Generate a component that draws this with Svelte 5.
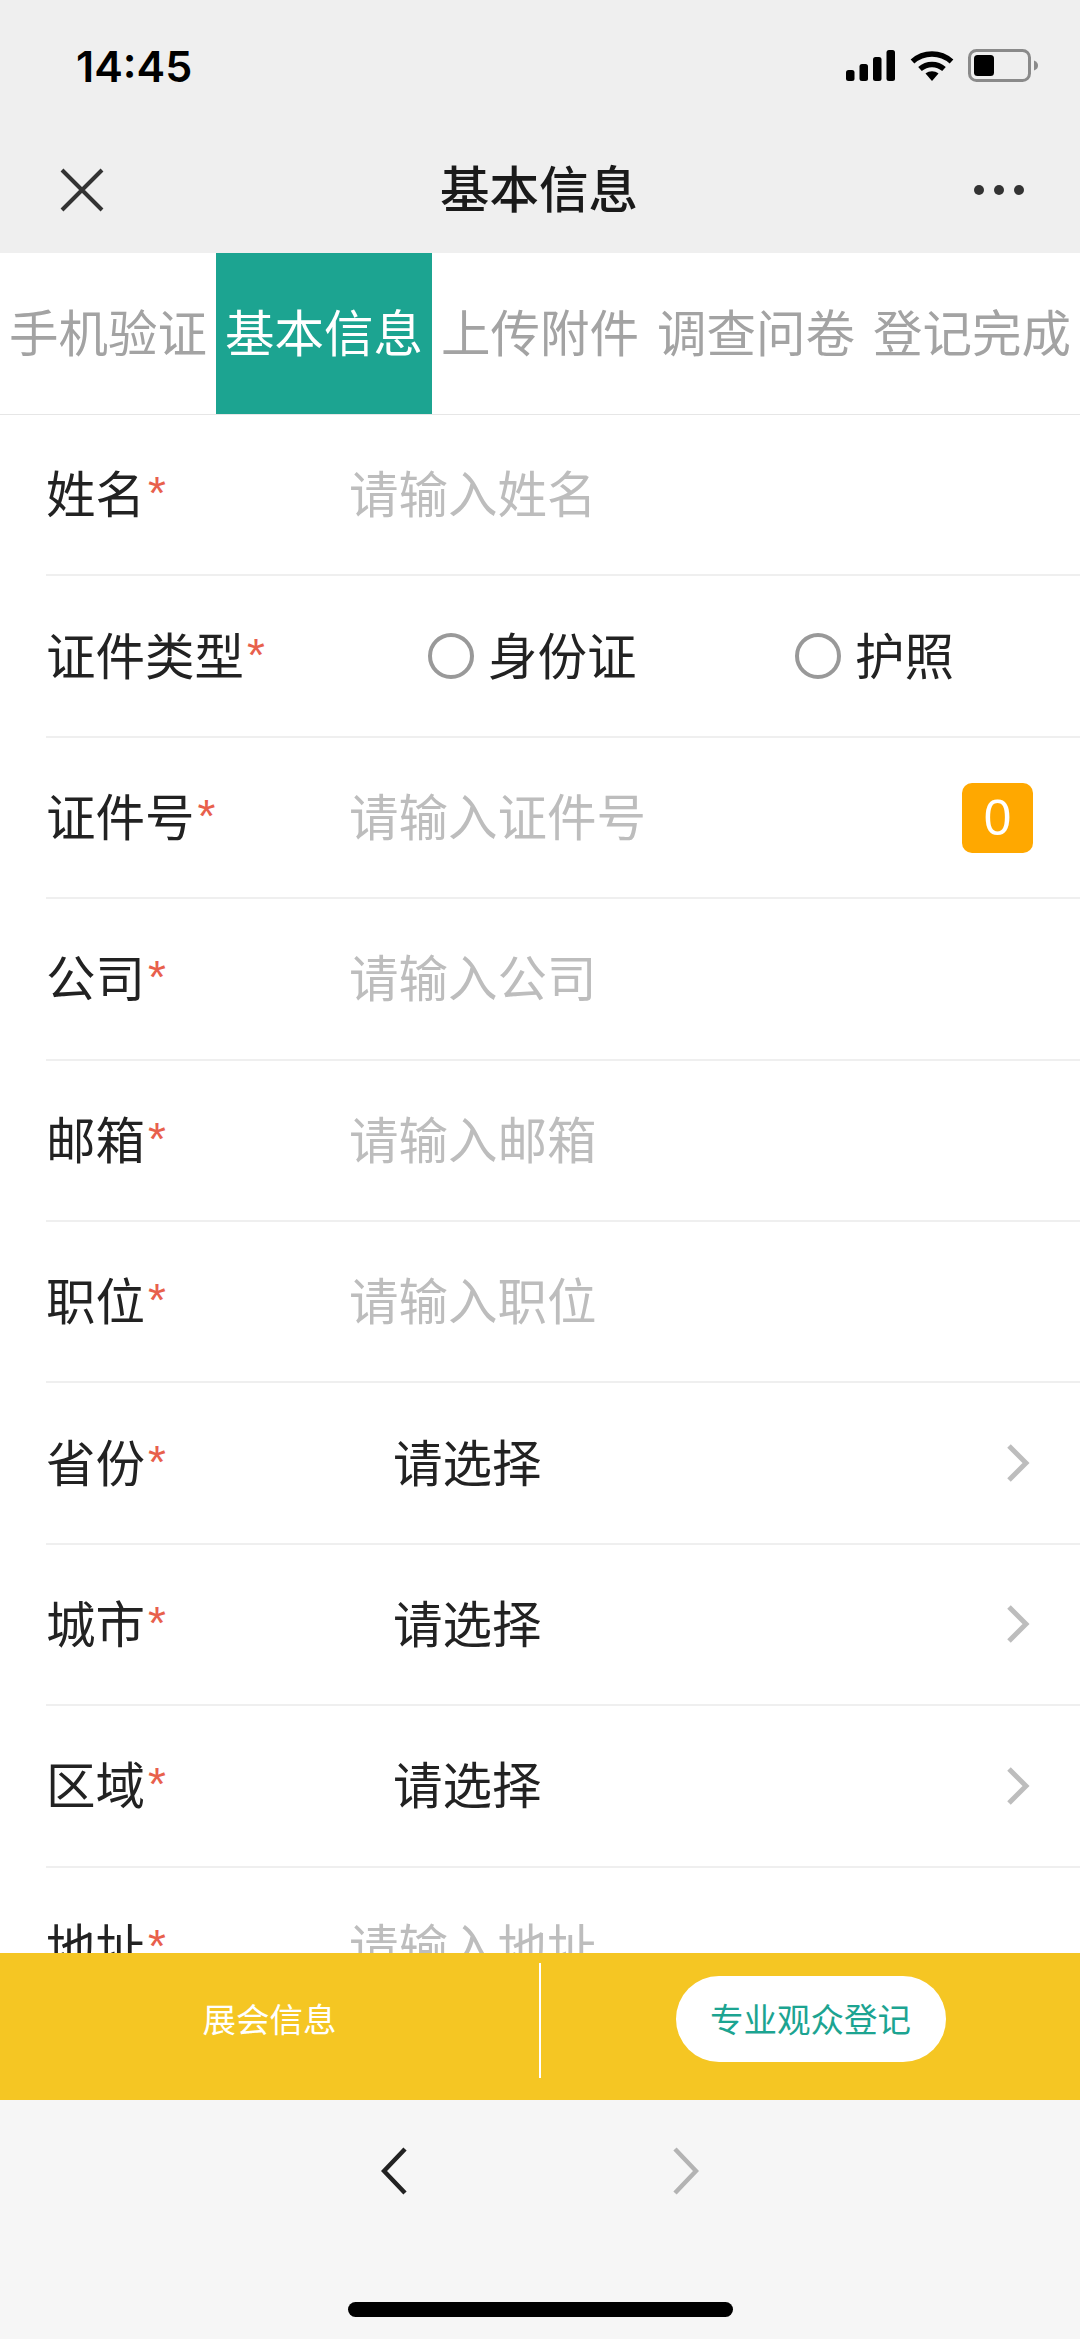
<script>
  const steps = ["手机验证", "基本信息", "上传附件", "调查问卷", "登记完成"]
  const activeStep = 1

  const rows = [
    { label: "姓名", type: "input", hint: "请输入姓名" },
    { label: "证件类型", type: "radio", options: ["身份证", "护照"] },
    { label: "证件号", type: "input", hint: "请输入证件号", badge: "0" },
    { label: "公司", type: "input", hint: "请输入公司" },
    { label: "邮箱", type: "input", hint: "请输入邮箱" },
    { label: "职位", type: "input", hint: "请输入职位" },
    { label: "省份", type: "select" },
    { label: "城市", type: "select" },
    { label: "区域", type: "select" },
    { label: "地址", type: "input", hint: "请输入地址" },
  ]
</script>

<div class="screen">
  <header class="top">
    <div class="status">
      <span class="time">14:45</span>
      <div class="status-icons">
        <svg width="50" height="32" viewBox="0 0 50 32" fill="#000">
          <rect x="0" y="20" width="8.5" height="11" rx="2.5" />
          <rect x="13.5" y="14" width="8.5" height="17" rx="2.5" />
          <rect x="27" y="7" width="8.5" height="24" rx="2.5" />
          <rect x="40.500" y="0" width="8.5" height="31" rx="2.5" />
        </svg>
        <svg class="wifi" width="44" height="32" viewBox="0 0 44 32" fill="none" stroke="#000">
          <path d="M2.500 11.500C13.500 1.500 30.500 1.500 41.500 11.500" stroke-width="5.500" />
          <path d="M10 19C17 13 27 13 34 19" stroke-width="5.500" />
          <path d="M15.500 23.500C19.500 20.500 24.500 20.500 28.500 23.500L22 31Z" fill="#000" stroke="none" />
        </svg>
        <svg class="battery" width="71" height="34" viewBox="0 0 71 34">
          <rect x="1.500" y="1.500" width="60" height="30" rx="7" fill="none" stroke="#8a8a8a" stroke-width="3" />
          <rect x="6" y="6" width="20" height="21" rx="3.500" fill="#000" />
          <path d="M66 11.500C69 12.500 70 14.500 70 16.500C70 18.500 69 20.500 66 21.500Z" fill="#8a8a8a" />
        </svg>
      </div>
    </div>
    <nav class="nav">
      <svg class="close" width="44" height="44" viewBox="0 0 44 44" fill="none" stroke="#333" stroke-width="4">
        <path d="M2 2L42 42M42 2L2 42" />
      </svg>
      <h1>基本信息</h1>
      <svg class="more" width="50" height="10" viewBox="0 0 50 10" fill="#333">
        <circle cx="5" cy="5" r="5" />
        <circle cx="25" cy="5" r="5" />
        <circle cx="45" cy="5" r="5" />
      </svg>
    </nav>
  </header>

  <div class="steps">
    {#each steps as step, i}
      <div class="step" class:active={i === activeStep}>{step}</div>
    {/each}
  </div>

  <main class="form">
    {#each rows as row}
      <div class="row">
        <div class="label">{row.label}<span class="req">*</span></div>
        {#if row.type === "input"}
          <span class="hint">{row.hint}</span>
          {#if row.badge}
            <span class="badge">{row.badge}</span>
          {/if}
        {:else if row.type === "radio"}
          <div class="radios">
            {#each row.options as option}
              <div class="radio"><i></i>{option}</div>
            {/each}
          </div>
        {:else}
          <span class="pick">请选择</span>
          <svg class="arrow" width="24" height="38" viewBox="0 0 24 38" fill="none" stroke="#bdbdbd" stroke-width="5">
            <path d="M3 2L20 19L3 36" />
          </svg>
        {/if}
      </div>
    {/each}
  </main>

  <div class="actions">
    <div class="action"><span class="action-text">展会信息</span></div>
    <div class="divider"></div>
    <div class="action"><span class="pill"><span class="pill-text">专业观众登记</span></span></div>
  </div>

  <footer class="toolbar">
    <div class="toolbar-arrows">
      <svg width="26" height="48" viewBox="0 0 26 48" fill="none" stroke="#222" stroke-width="4.500">
        <path d="M24 2L3 24L24 46" />
      </svg>
      <svg width="26" height="48" viewBox="0 0 26 48" fill="none" stroke="#b3b3b3" stroke-width="4.500">
        <path d="M2 2L23 24L2 46" />
      </svg>
    </div>
    <div class="home-bar"></div>
  </footer>
</div>

<style>
  :global(body) {
    background: #fff;
  }

  .screen {
    display: flex;
    flex-direction: column;
    width: 1080px;
    height: 2339px;
    overflow: hidden;
    font-family: "Noto Sans CJK SC", "Liberation Sans", sans-serif;
    font-size: 49.5px;
    line-height: 60px;
    color: #222;
  }

  .top {
    flex: none;
    height: 253px;
    background: #efefef;
  }

  .status {
    display: flex;
    align-items: center;
    justify-content: space-between;
    height: 132px;
    padding: 0 41px 0 76px;
    box-sizing: border-box;
  }

  .time {
    font-family: Inter, "Liberation Sans", sans-serif;
    font-size: 43px;
    font-weight: 600;
    color: #000;
  }

  .status-icons {
    display: flex;
    align-items: center;
  }

  .wifi {
    margin-left: 14px;
  }

  .battery {
    margin-left: 14px;
  }

  .nav {
    display: flex;
    align-items: center;
    justify-content: space-between;
    height: 116px;
    padding: 0 56px 0 60px;
    box-sizing: border-box;
  }

  .nav h1 {
    margin: 0 0 6px;
    font-size: 49.5px;
    font-weight: 500;
    line-height: 1;
    color: #1a1a1a;
  }

  .steps {
    flex: none;
    display: flex;
    height: 162px;
    border-bottom: 1px solid #e6e6e6;
    box-sizing: border-box;
  }

  .step {
    flex: 1;
    display: flex;
    align-items: center;
    justify-content: center;
    padding-bottom: 6px;
    color: #a3a3a3;
    white-space: nowrap;
  }

  .step.active {
    background: #1ca491;
    color: #fff;
  }

  .form {
    flex: 1;
    min-height: 0;
    overflow: hidden;
    padding-left: 46px;
  }

  .row {
    display: flex;
    align-items: center;
    height: 161.4px;
    padding-bottom: 5px;
    border-bottom: 2px solid #efefef;
    box-sizing: border-box;
  }

  .label {
    flex: none;
    width: 303px;
    white-space: nowrap;
  }

  .req {
    position: relative;
    top: -4px;
    margin-left: 3px;
    font-family: "Liberation Sans", sans-serif;
    font-size: 46px;
    line-height: 1;
    color: #e8604c;
  }

  .hint {
    flex: 1;
    color: #bdbdbd;
  }

  .badge {
    display: flex;
    align-items: center;
    justify-content: center;
    width: 71px;
    height: 70px;
    margin-top: 7px;
    margin-right: 47px;
    border-radius: 10px;
    background: #ffa800;
    font-family: "Liberation Sans", sans-serif;
    color: #fff;
  }

  .radios {
    display: flex;
    padding-left: 79px;
  }

  .radio {
    display: flex;
    align-items: center;
    gap: 14px;
    width: 367px;
  }

  .radio i {
    width: 46px;
    height: 46px;
    margin-top: 4px;
    border: 4px solid #999;
    border-radius: 50%;
    box-sizing: border-box;
  }

  .pick {
    flex: 1;
    padding-left: 44px;
  }

  .arrow {
    margin-right: 50px;
    margin-top: 5px;
  }

  .actions {
    flex: none;
    display: flex;
    align-items: center;
    height: 147px;
    padding-bottom: 10px;
    box-sizing: border-box;
    background: #f5c623;
    font-size: 33.5px;
    line-height: 40px;
    color: #fff;
  }

  .action {
    flex: 1;
    display: flex;
    justify-content: center;
  }

  .action-text {
    padding-bottom: 8px;
  }

  .divider {
    width: 2px;
    height: 115px;
    margin-bottom: 2px;
    background: #fff;
  }

  .pill {
    display: flex;
    align-items: center;
    justify-content: center;
    width: 270px;
    height: 86px;
    margin-bottom: 5px;
    border-radius: 43px;
    background: #fff;
    color: #1ca491;
  }

  .pill-text {
    padding-bottom: 3px;
  }

  .toolbar {
    flex: none;
    display: flex;
    flex-direction: column;
    align-items: center;
    height: 239px;
    padding-top: 47px;
    box-sizing: border-box;
    background: #f6f6f6;
  }

  .toolbar-arrows {
    display: flex;
    gap: 266px;
  }

  .home-bar {
    width: 385px;
    height: 15px;
    margin-top: 107px;
    border-radius: 8px;
    background: #000;
  }
</style>
